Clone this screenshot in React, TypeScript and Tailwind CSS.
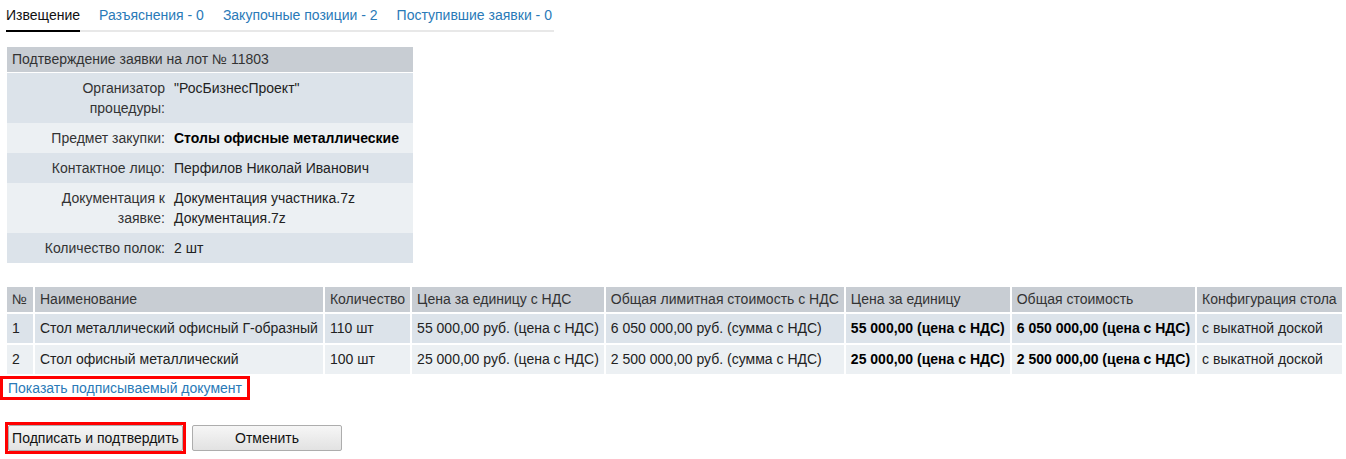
import React from "react";

const info: { label: string; value: React.ReactNode; bold?: boolean }[] = [
  { label: "Организатор процедуры:", value: '"РосБизнесПроект"' },
  { label: "Предмет закупки:", value: "Столы офисные металлические", bold: true },
  { label: "Контактное лицо:", value: "Перфилов Николай Иванович" },
  {
    label: "Документация к заявке:",
    value: (
      <>
        Документация участника.7z
        <br />
        Документация.7z
      </>
    ),
  },
  { label: "Количество полок:", value: "2 шт" },
];

const cols = [
  { title: "№", w: "w-[26px]" },
  { title: "Наименование", w: "w-[287px]" },
  { title: "Количество", w: "w-[84px]" },
  { title: "Цена за единицу с НДС", w: "w-[191px]" },
  { title: "Общая лимитная стоимость с НДС", w: "w-[238px]" },
  { title: "Цена за единицу", w: "w-[163px]" },
  { title: "Общая стоимость", w: "w-[182px]" },
  { title: "Конфигурация стола", w: "w-[144px]" },
];

const rows = [
  ["1", "Стол металлический офисный Г-образный", "110 шт", "55 000,00 руб. (цена с НДС)", "6 050 000,00 руб. (сумма с НДС)", "55 000,00 (цена с НДС)", "6 050 000,00 (цена с НДС)", "с выкатной доской"],
  ["2", "Стол офисный металлический", "100 шт", "25 000,00 руб. (цена с НДС)", "2 500 000,00 руб. (сумма с НДС)", "25 000,00 (цена с НДС)", "2 500 000,00 (цена с НДС)", "с выкатной доской"],
];

const tabs = ["Извещение", "Разъяснения - 0", "Закупочные позиции - 2", "Поступившие заявки - 0"];

export default function App() {
  return (
    <div className="min-h-[459px] bg-white text-[14px] text-[#222] font-['Liberation_Sans',Arial,sans-serif]">
      {/* tabs */}
      <div className="pl-[6px] pt-[5px]">
        <div className="inline-flex gap-[19px] border-b-2 border-[#e8e8e8] pr-[2px]">
          {tabs.map((t, i) => (
            <div
              key={t}
              className={
                i === 0
                  ? "mb-[-2px] border-b-2 border-black pb-[5px] leading-[20px] text-[#111]"
                  : "pb-[5px] leading-[20px] text-[#2a7ab8]"
              }
            >
              {t}
            </div>
          ))}
        </div>
      </div>

      {/* lot info */}
      <div className="ml-[7px] mt-[15px] w-[406px]">
        <div className="h-[25px] bg-[#c8cdd3] px-[5px] leading-[25px] text-[#333]">
          Подтверждение заявки на лот № 11803
        </div>
        <div className="mt-px">
          {info.map((r, i) => (
            <div
              key={r.label}
              className={
                "flex py-[5px] leading-[20px] " +
                (i % 2 === 0 ? "bg-[#dce3ea]" : "bg-[#ecf0f3]")
              }
            >
              <div className="w-[158px] shrink-0 pl-[30px] text-right text-[#333]">{r.label}</div>
              <div className={"pl-[9px] " + (r.bold ? "font-bold text-black" : "")}>{r.value}</div>
            </div>
          ))}
        </div>
      </div>

      {/* positions */}
      <table className="ml-[5px] mt-[22px] border-separate border-spacing-[2px] whitespace-nowrap">
        <thead>
          <tr>
            {cols.map((c) => (
              <th
                key={c.title}
                className={c.w + " h-[25px] bg-[#c8cdd3] px-[5px] text-left font-normal text-[#333]"}
              >
                {c.title}
              </th>
            ))}
          </tr>
        </thead>
        <tbody>
          {rows.map((r, ri) => (
            <tr key={ri} className={ri === 0 ? "bg-[#dce3ea]" : "bg-[#ecf0f3]"}>
              {r.map((cell, ci) => (
                <td
                  key={ci}
                  className={
                    "h-[29px] px-[5px] " + (ci === 5 || ci === 6 ? "font-bold text-black" : "")
                  }
                >
                  {cell}
                </td>
              ))}
            </tr>
          ))}
        </tbody>
      </table>

      <div className="inline-block border-[3px] border-[#f00] px-[5px] leading-[18px] text-[#2a7ab8]">
        Показать подписываемый документ
      </div>

      <div className="mt-[22px] flex items-center pl-[5px]">
        <div className="border-[3px] border-[#f00]">
          <button className="h-[26px] w-[175px] rounded-[2px] border border-[#adadad] bg-gradient-to-b from-[#f6f6f6] to-[#e2e2e2] text-[14px] text-[#111]">
            Подписать и подтвердить
          </button>
        </div>
        <button className="ml-[6px] h-[26px] w-[150px] rounded-[2px] border border-[#adadad] bg-gradient-to-b from-[#f6f6f6] to-[#e2e2e2] text-[14px] text-[#111]">
          Отменить
        </button>
      </div>
    </div>
  );
}
